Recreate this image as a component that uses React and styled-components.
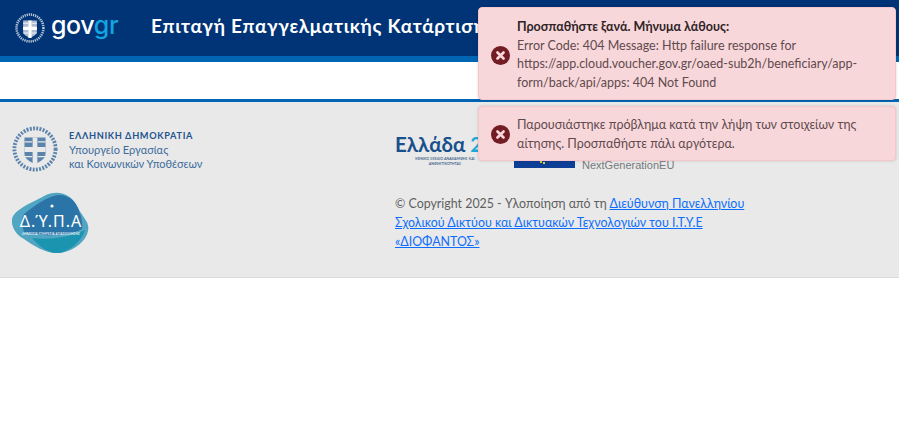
import React from 'react';
import styled, { createGlobalStyle } from 'styled-components';

const GlobalStyle = createGlobalStyle`
  html, body {
    margin: 0;
    padding: 0;
    background: #fff;
    font-family: Lato, "Noto Sans", sans-serif;
  }
`;

const Page = styled.div`
  width: 899px;
  height: 445px;
  overflow: hidden;
  position: relative;
`;

const Header = styled.header`
  height: 56px;
  background: #003476;
  border-bottom: 6px solid #0065b3;
  display: flex;
  align-items: center;
  padding-left: 15px;
  overflow: hidden;
`;

const Brand = styled.div`
  display: flex;
  align-items: center;
  gap: 6px;
  width: 136px;
  flex: none;
`;

const BrandWord = styled.span`
  font-family: Inter, sans-serif;
  font-size: 25px;
  line-height: 26px;
  font-weight: 500;
  color: #fff;
  letter-spacing: -0.4px;
  margin-top: -7px;
  span { color: #12a5e0; }
`;

const Title = styled.h1`
  margin: 0;
  font-size: 19px;
  font-weight: 700;
  letter-spacing: 0.7px;
  color: #fff;
  white-space: nowrap;
  margin-top: -6px;
`;

const Blank = styled.div`
  height: 37px;
`;

const Footer = styled.footer`
  background: #e9e9e9;
  border-top: 3px solid #0065b3;
  border-bottom: 1px solid #dcdcdc;
  height: 153px;
  padding: 22px 0 0 12px;
  display: grid;
  grid-template-columns: 383px 1fr;
  grid-template-rows: 68px auto;
`;

const Ministry = styled.div`
  display: flex;
  align-items: center;
  gap: 11px;
  height: 50px;
`;

const MinistryText = styled.div`
  color: #3d6c9c;
  font-size: 11px;
  line-height: 14px;
  padding-top: 1px;
  b {
    display: block;
    font-size: 9.2px;
    letter-spacing: 0.65px;
    color: #23548e;
    line-height: 14px;
  }
`;

const Funding = styled.div`
  display: flex;
  align-items: flex-start;
  height: 50px;
`;

const Greece = styled.div`
  width: 119px;
  flex: none;
  color: #17508c;
  font-size: 20.5px;
  font-weight: 700;
  line-height: 24px;
  padding-top: 8px;
  white-space: nowrap;
  span { color: #1ea9d4; }
  small {
    display: block;
    font-size: 3.6px;
    line-height: 5px;
    font-weight: 600;
    width: 60px;
    margin-left: 20px;
    white-space: normal;
    text-align: center;
    color: #355a85;
  }
`;

const NextGen = styled.div`
  position: relative;
  font-family: "Liberation Sans", sans-serif;
  font-size: 11px;
  line-height: 14px;
  color: #77787b;
  padding: 34px 0 0 68px;
`;

const Flag = styled.div`
  position: absolute;
  left: 0;
  top: 22px;
  width: 61px;
  height: 22px;
  background:
    radial-gradient(circle at 27px 16px, #e8c53a 1px, transparent 1.5px),
    radial-gradient(circle at 30px 17px, #e8c53a 1px, transparent 1.5px),
    #0d3f96;
`;

const Copyright = styled.p`
  margin: 0;
  width: 356px;
  font-size: 12.4px;
  line-height: 18.75px;
  color: #5f5f5f;
  padding-top: 3px;
  a { color: #0d6efd; text-decoration: underline; }
`;

const Toasts = styled.div`
  position: absolute;
  top: 7px;
  left: 478px;
  width: 418px;
  display: flex;
  flex-direction: column;
  gap: 6px;
`;

const Toast = styled.div`
  background: #f8d7da;
  border: 1px solid #f5c6cb;
  border-radius: 4px;
  box-shadow: 0 0 3px rgba(0, 0, 0, 0.15);
  color: #5f4a4e;
  padding: ${(p) => (p.$tall ? '10px 12px 7px' : '9px 12px 7px')};
  display: flex;
  align-items: center;
  gap: 7px;
  font-size: 12.5px;
  line-height: 18.5px;
`;

const ToastIcon = styled.svg`
  width: 19px;
  height: 19px;
  flex: none;
`;

const ToastBody = styled.div`
  flex: 1;
  b {
    display: block;
    color: #2e2326;
    font-weight: 700;
  }
`;

const CrossIcon = () => (
  <ToastIcon viewBox="0 0 20 20">
    <circle cx="10" cy="10" r="10" fill="#721c24" />
    <path d="M6.8 6.8l6.4 6.4M13.2 6.8l-6.4 6.4" stroke="#f8d7da" strokeWidth="2.8" strokeLinecap="round" />
  </ToastIcon>
);

const Emblem = ({ size, color, shield = color, bar }) => (
  <svg width={size} height={size} viewBox="0 0 48 48">
    <circle cx="24" cy="24" r="21.5" fill="none" stroke={color} strokeWidth="4" strokeDasharray="2 1.4" />
    <path d="M13 12h22v17c0 6-6 8-11 11-5-3-11-5-11-11z" fill={shield} />
    <path d="M21.5 12h5v28h-5zM13 22h22v5H13z" fill={bar} />
    <path d="M13 16.5h8M27 16.5h8M13 32h8M27 32h8" stroke={bar} strokeWidth="1.3" />
  </svg>
);

const DypaLogo = () => (
  <svg width="78" height="62" viewBox="0 0 78 62">
    <path d="M0 27C2 17 22 10 32 4 46-3 60 2 66 16c5 10 12 14 10 23-2 11-16 21-29 22-13 1-25-7-35-14C5 43-1 36 0 27z" fill="#4fa5c2" />
    <path d="M12 22C22 14 34 5 46 3c10-1 17 6 20 13 3 8 5 14 4 21-14 7-38 8-58 3-2-7-3-13 0-18z" fill="#2b74a8" />
    <path d="M20 46c16 2 36 0 53-8-3 11-15 21-26 23-10 1-19-6-27-15z" fill="#1b94b0" />
    <circle cx="40" cy="14" r="1.6" fill="#fff" />
    <text x="39" y="35" textAnchor="middle" fontFamily="Noto Sans" fontSize="16" letterSpacing="1" fill="#fff">Δ.Ύ.Π.Α</text>
    <text x="39" y="42.5" textAnchor="middle" fontFamily="Noto Sans" fontSize="3.4" fill="#fff">ΔΗΜΟΣΙΑ ΥΠΗΡΕΣΙΑ ΑΠΑΣΧΟΛΗΣΗΣ</text>
  </svg>
);

export default function App() {
  return (
    <Page>
      <GlobalStyle />
      <Header>
        <Brand>
          <Emblem size={30} color="#b9c7da" shield="#aebdd2" bar="#ffffff" />
          <BrandWord>gov<span>gr</span></BrandWord>
        </Brand>
        <Title>Επιταγή Επαγγελματικής Κατάρτισης</Title>
      </Header>
      <Blank />
      <Footer>
        <Ministry>
          <Emblem size={46} color="#5b84ad" shield="#5b84ad" bar="#e9e9e9" />
          <MinistryText>
            <b>ΕΛΛΗΝΙΚΗ ΔΗΜΟΚΡΑΤΙΑ</b>
            Υπουργείο Εργασίας<br />
            και Κοινωνικών Υποθέσεων
          </MinistryText>
        </Ministry>
        <Funding>
          <Greece>
            Ελλάδα <span>2.0</span>
            <small>ΕΘΝΙΚΟ ΣΧΕΔΙΟ ΑΝΑΚΑΜΨΗΣ ΚΑΙ ΑΝΘΕΚΤΙΚΟΤΗΤΑΣ</small>
          </Greece>
          <NextGen>
            <Flag />
            NextGenerationEU
          </NextGen>
        </Funding>
        <DypaLogo />
        <Copyright>
          © Copyright 2025 - Υλοποίηση από τη <a href="#dts">Διεύθυνση Πανελληνίου Σχολικού Δικτύου και Δικτυακών Τεχνολογιών του Ι.Τ.Υ.Ε «ΔΙΟΦΑΝΤΟΣ»</a>
        </Copyright>
      </Footer>
      <Toasts>
        <Toast $tall>
          <CrossIcon />
          <ToastBody>
            <b>Προσπαθήστε ξανά. Μήνυμα λάθους:</b>
            Error Code: 404 Message: Http failure response for https://app.cloud.voucher.gov.gr/oaed-sub2h/beneficiary/app-form/back/api/apps: 404 Not Found
          </ToastBody>
        </Toast>
        <Toast>
          <CrossIcon />
          <ToastBody>Παρουσιάστηκε πρόβλημα κατά την λήψη των στοιχείων της αίτησης. Προσπαθήστε πάλι αργότερα.</ToastBody>
        </Toast>
      </Toasts>
    </Page>
  );
}
